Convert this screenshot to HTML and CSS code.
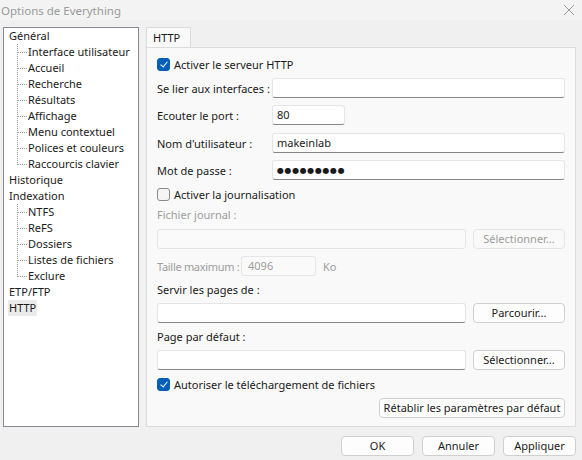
FILE: index.html
```html
<!DOCTYPE html>
<html lang="fr">
<head>
    <meta charset="UTF-8">
    <title>Options de Everything</title>
    <link rel="stylesheet" href="styles.css">
</head>
<body>
    <div class="titlebar">
        <span class="title">Options de Everything</span>
        <svg class="close" width="12" height="12" viewBox="0 0 12 12">
            <path d="M1 1 L11 11 M11 1 L1 11" stroke="#9a9a9a" stroke-width="1" fill="none"/>
        </svg>
    </div>

    <div class="main">
        <ul class="tree">
            <li class="node">Général</li>
            <li>
                <ul class="children">
                    <li>Interface utilisateur</li>
                    <li>Accueil</li>
                    <li>Recherche</li>
                    <li>Résultats</li>
                    <li>Affichage</li>
                    <li>Menu contextuel</li>
                    <li>Polices et couleurs</li>
                    <li class="last">Raccourcis clavier</li>
                </ul>
            </li>
            <li class="node">Historique</li>
            <li class="node">Indexation</li>
            <li>
                <ul class="children">
                    <li>NTFS</li>
                    <li>ReFS</li>
                    <li>Dossiers</li>
                    <li>Listes de fichiers</li>
                    <li class="last">Exclure</li>
                </ul>
            </li>
            <li class="node">ETP/FTP</li>
            <li class="node selected">HTTP</li>
        </ul>

        <div class="right">
            <div class="tabs">
                <div class="tab">HTTP</div>
            </div>
            <div class="panel">
                <label class="check-row first">
                    <span class="box checked"></span>Activer le serveur HTTP
                </label>

                <div class="field-row">
                    <span class="field-label">Se lier aux interfaces :</span>
                    <span class="input grow"></span>
                </div>
                <div class="field-row">
                    <span class="field-label">Ecouter le port :</span>
                    <span class="input port">80</span>
                </div>
                <div class="field-row gap8">
                    <span class="field-label">Nom d'utilisateur :</span>
                    <span class="input grow">makeinlab</span>
                </div>
                <div class="field-row">
                    <span class="field-label">Mot de passe :</span>
                    <span class="input grow dots">●●●●●●●●●</span>
                </div>

                <label class="check-row">
                    <span class="box"></span>Activer la journalisation
                </label>
                <div class="text-row disabled">Fichier journal :</div>
                <div class="path-row tight">
                    <span class="input grow off"></span>
                    <span class="btn off">Sélectionner...</span>
                </div>
                <div class="size-row disabled">
                    <span class="size-label">Taille maximum :</span>
                    <span class="input size off">4096</span>
                    <span>Ko</span>
                </div>

                <div class="text-row">Servir les pages de :</div>
                <div class="path-row">
                    <span class="input grow"></span>
                    <span class="btn">Parcourir...</span>
                </div>
                <div class="text-row">Page par défaut :</div>
                <div class="path-row">
                    <span class="input grow"></span>
                    <span class="btn">Sélectionner...</span>
                </div>

                <label class="check-row">
                    <span class="box checked"></span>Autoriser le téléchargement de fichiers
                </label>
                <div class="reset-row">
                    <span class="btn wide">Rétablir les paramètres par défaut</span>
                </div>
            </div>
        </div>
    </div>

    <div class="footer">
        <span class="btn dlg">OK</span>
        <span class="btn dlg">Annuler</span>
        <span class="btn dlg">Appliquer</span>
    </div>
</body>
</html>
```

FILE: styles.css
```css
body {
    margin: 0;
    width: 582px;
    height: 460px;
    background: #f0f0f0;
    font-family: "Noto Sans", "DejaVu Sans", sans-serif;
    font-size: 11px;
    color: #1a1a1a;
    white-space: nowrap;
    overflow: hidden;
}

ul {
    list-style: none;
    margin: 0;
    padding: 0;
}

/* title bar */
.titlebar {
    height: 20px;
    background: #f3f3f3;
    display: flex;
    justify-content: space-between;
    align-items: center;
}

.title {
    color: #9a9a9a;
    font-size: 11.5px;
    padding-left: 1px;
}

.close {
    margin-right: 7px;
}

/* body */
.main {
    display: flex;
    gap: 7px;
    padding: 7px 0 0 3px;
}

.tree {
    width: 130px;
    height: 398px;
    padding: 0 0 0 4px;
    background: #fff;
    border: 1px solid #858991;
}

.tree li {
    line-height: 16px;
    height: 16px;
}

.tree li:has(.children) {
    height: auto;
}

.tree .node {
    display: block;
    width: fit-content;
    padding: 0 1px;
}

.selected {
    background: #ebebeb;
}

.children {
    margin-left: 9px;
}

.children li {
    padding-left: 11px;
    background-image:
        repeating-linear-gradient(to bottom, #9c9c9c 0 1px, transparent 1px 2px),
        repeating-linear-gradient(to right, #9c9c9c 0 1px, transparent 1px 2px);
    background-repeat: no-repeat;
    background-size: 1px 16px, 9px 1px;
    background-position: 0 0, 1px 8px;
}

.children li.last {
    background-size: 1px 9px, 9px 1px;
}

/* tab panel */
.right {
    width: 430px;
}

.tabs {
    display: flex;
}

.tab {
    width: 37px;
    height: 19px;
    line-height: 19px;
    padding-left: 6px;
    background: #f9f9f9;
    border: 1px solid #dcdcdc;
    border-bottom: none;
}

.panel {
    height: 378px;
    background: #f9f9f9;
    border: 1px solid #dcdcdc;
    padding: 0 10px;
    display: flex;
    flex-direction: column;
}

.check-row {
    display: flex;
    align-items: center;
    height: 14px;
    margin-top: 7px;
}

.check-row.first {
    margin-top: 9px;
}

.box {
    width: 11px;
    height: 11px;
    border: 1px solid #8a8a8a;
    border-radius: 3px;
    background: #f5f5f5;
    margin-right: 4px;
    position: relative;
}

.box.checked {
    background: #005fb8;
    border-color: #005fb8;
}

.box.checked::after {
    content: "";
    position: absolute;
    left: 4px;
    top: 1px;
    width: 3px;
    height: 6px;
    border: solid #fff;
    border-width: 0 1px 1px 0;
    transform: rotate(40deg);
}

.field-row {
    display: flex;
    align-items: center;
    height: 20px;
    margin-top: 7px;
}

.field-row.gap8 {
    margin-top: 8px;
}

.field-label {
    width: 115px;
}

.input {
    box-sizing: border-box;
    height: 20px;
    line-height: 18px;
    padding-left: 4px;
    background: #fff;
    border: 1px solid #e5e5e5;
    border-bottom-color: #868686;
    border-radius: 3px;
}

.input.grow {
    flex: 1;
}

.input.port {
    width: 73px;
}

.input.dots {
    font-size: 8px;
    letter-spacing: 0.6px;
}

.input.off {
    background: #fafafa;
    border-bottom-color: #e5e5e5;
    color: #9d9d9d;
}

.size-label {
    flex: 0 0 84px;
    letter-spacing: -0.3px;
}

.input.size {
    flex: 0 0 75px;
    margin-right: 7px;
    padding-left: 6px;
}

.disabled {
    color: #9d9d9d;
}

.text-row {
    height: 16px;
    line-height: 16px;
    margin-top: 6px;
}

.path-row {
    display: flex;
    gap: 7px;
    margin-top: 5px;
}

.path-row.tight {
    margin-top: 6px;
}

.size-row {
    display: flex;
    align-items: center;
    height: 20px;
    margin-top: 7px;
}

.btn {
    box-sizing: border-box;
    display: inline-block;
    width: 92px;
    height: 20px;
    line-height: 18px;
    text-align: center;
    background: #fdfdfd;
    border: 1px solid #d0d0d0;
    border-radius: 4px;
}

.btn.off {
    background: #f9f9f9;
    border-color: #e5e5e5;
    color: #9d9d9d;
}

.reset-row {
    display: flex;
    justify-content: flex-end;
    margin-top: 7px;
}

.btn.wide {
    width: 186px;
}

.footer {
    display: flex;
    justify-content: flex-end;
    gap: 8px;
    padding: 9px 6px 0 0;
}

.btn.dlg {
    width: 73px;
}
```
